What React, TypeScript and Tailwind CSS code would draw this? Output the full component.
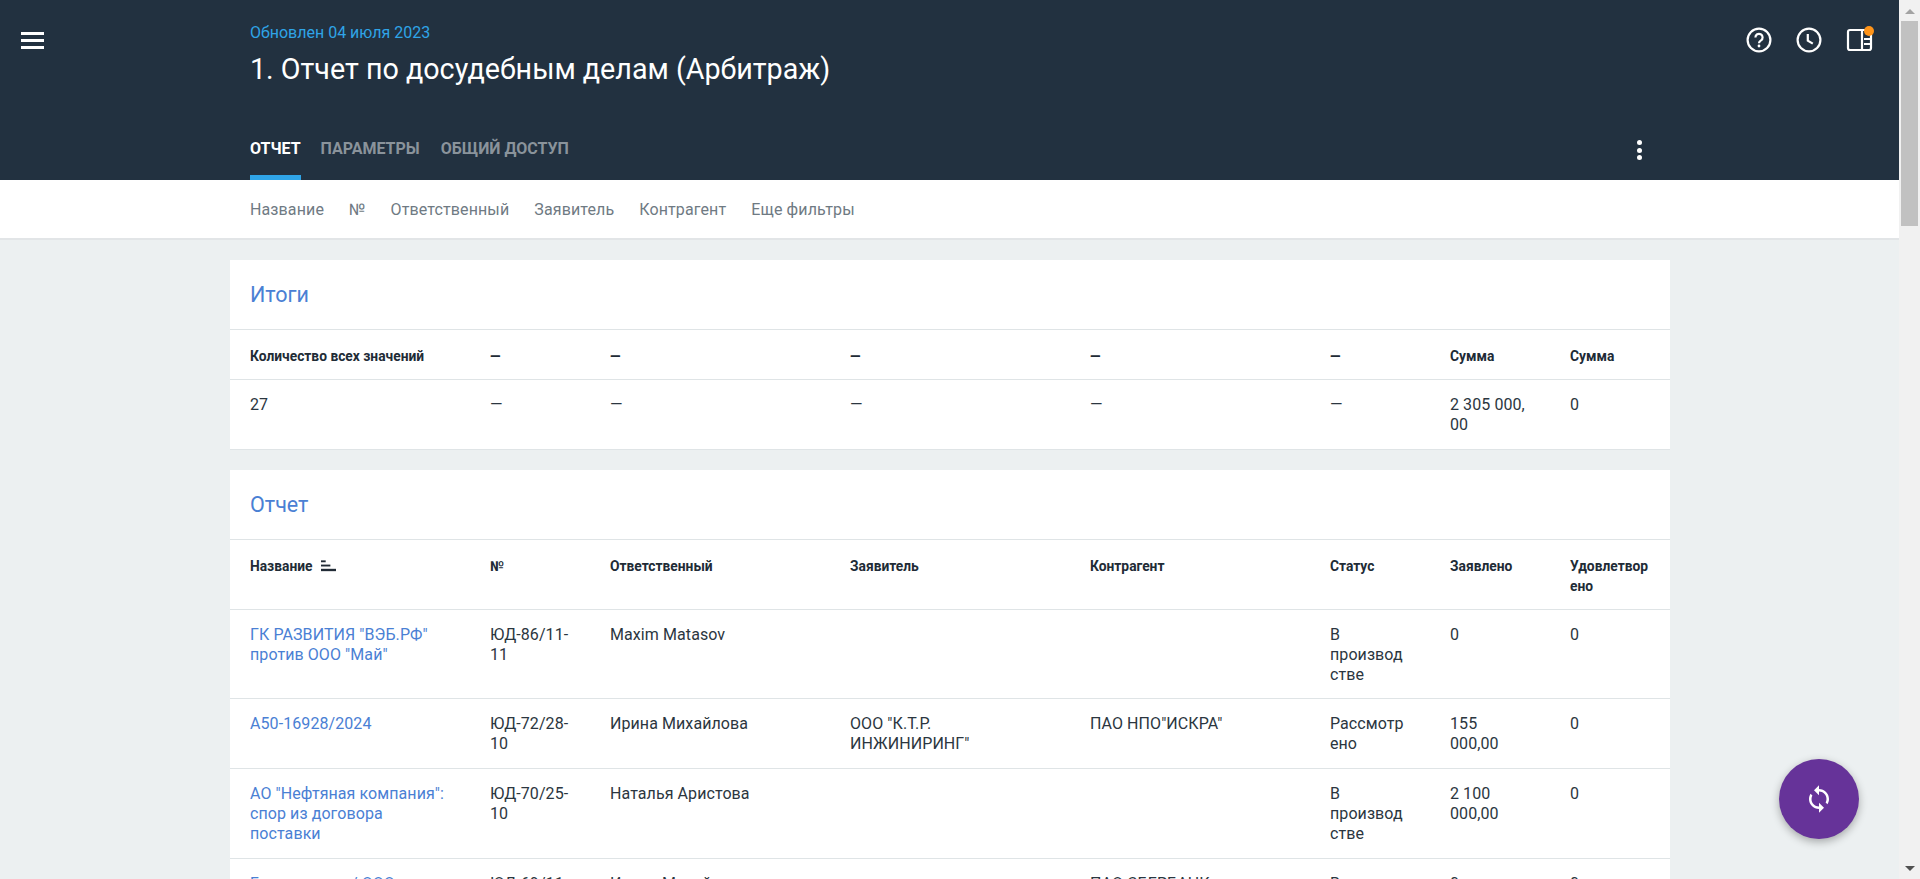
const grid = "grid grid-cols-[240px_120px_240px_240px_240px_120px_120px_120px]";

const reportRows = [
  {
    name: 'ГК РАЗВИТИЯ "ВЭБ.РФ" против ООО "Май"',
    num: "ЮД-86/11-11",
    owner: "Maxim Matasov",
    applicant: "",
    party: "",
    status: "В производстве",
    claimed: "0",
    granted: "0",
    height: "",
  },
  {
    name: "А50-16928/2024",
    num: "ЮД-72/28-10",
    owner: "Ирина Михайлова",
    applicant: 'ООО "К.Т.Р. ИНЖИНИРИНГ"',
    party: 'ПАО НПО"ИСКРА"',
    status: "Рассмотрено",
    claimed: "155 000,00",
    granted: "0",
    height: "h-[70px]",
  },
  {
    name: 'АО "Нефтяная компания": спор из договора поставки',
    num: "ЮД-70/25-10",
    owner: "Наталья Аристова",
    applicant: "",
    party: "",
    status: "В производстве",
    claimed: "2 100 000,00",
    granted: "0",
    height: "h-[90px]",
  },
  {
    name: "Банкротство / ООО",
    num: "ЮД-69/11-11",
    owner: "Ирина Михайлова",
    applicant: "",
    party: "ПАО СБЕРБАНК",
    status: "В производстве",
    claimed: "0",
    granted: "0",
    height: "",
  },
];

function Cell({ children, head }: { children?: React.ReactNode; head?: boolean }) {
  return (
    <div
      className={`pl-5 pr-[21.5px] leading-5 [overflow-wrap:anywhere] ${
        head
          ? "pt-4 pb-3 text-[13.8px] font-bold text-[#212b36]"
          : "pt-[15px] pb-[13px] text-base tracking-[0.08px] text-[#2b3640]"
      }`}
    >
      {children}
    </div>
  );
}

function CardTitle({ children }: { children: React.ReactNode }) {
  return (
    <div className="h-[70px] border-b border-[#dfe4e6] pl-5 text-[21.5px] leading-[70px] text-[#4a80d4]">
      {children}
    </div>
  );
}

export default function App() {
  return (
    <div className="flex h-[879px] overflow-hidden bg-[#ecf0f1] font-['Roboto',sans-serif]">
      <div className="relative min-w-0 flex-1 overflow-hidden">
        {/* Header */}
        <header className="relative h-[180px] bg-[#223140]">
          <button className="absolute left-[21px] top-[32px] flex w-[23px] flex-col gap-[4.5px]">
            <span className="h-[2.5px] w-full bg-white" />
            <span className="h-[2.5px] w-full bg-white" />
            <span className="h-[2.5px] w-full bg-white" />
          </button>

          <div className="absolute right-[26px] top-[26px] flex items-center gap-[22px]">
            <svg width="28" height="28" viewBox="0 0 28 28" fill="none" stroke="#fff" strokeWidth="2.2">
              <circle cx="14" cy="14" r="11.4" />
              <path d="M10.4 11.4a3.6 3.6 0 1 1 5.6 3c-1.3.8-2 1.4-2 2.8" />
              <circle cx="14" cy="20" r="1.4" fill="#fff" stroke="none" />
            </svg>
            <svg width="28" height="28" viewBox="0 0 28 28" fill="none" stroke="#fff" strokeWidth="2.2">
              <circle cx="14" cy="14" r="11.4" />
              <path d="M12.8 8v6.6l5 3" />
            </svg>
            <div className="relative h-[28px] w-[28px]">
              <svg width="28" height="28" viewBox="0 0 28 28" fill="none" stroke="#fff" strokeWidth="2.2">
                <rect x="3" y="4" width="23" height="20" rx="2" />
                <path d="M17 4v20M19 13h7M19 18h7" />
              </svg>
              <span className="absolute -right-px top-0 h-[10px] w-[10px] rounded-full bg-[#ff9419]" />
            </div>
          </div>

          <div className="pl-[250px]">
            <div className="pt-[23px] text-base leading-5 text-[#2fa4e7]">Обновлен 04 июля 2023</div>
            <h1 className="mt-2 text-[28.7px] leading-9 text-white">1. Отчет по досудебным делам (Арбитраж)</h1>
          </div>

          <nav className="absolute bottom-0 left-[250px] flex gap-5 text-base leading-5 font-bold uppercase">
            <div className="h-[41px] border-b-[5px] border-[#2fa4e7] text-white">Отчет</div>
            <div className="text-[#8a939b]">Параметры</div>
            <div className="ml-px text-[#8a939b]">Общий доступ</div>
          </nav>
          <div className="absolute left-[1637px] top-[140px] flex flex-col gap-[2.5px]">
            <span className="h-[5px] w-[5px] rounded-full bg-white" />
            <span className="h-[5px] w-[5px] rounded-full bg-white" />
            <span className="h-[5px] w-[5px] rounded-full bg-white" />
          </div>
        </header>

        {/* Filters */}
        <div className="flex h-[60px] items-center gap-[25px] border-b-2 border-[#e2e5e7] bg-white pl-[250px] pt-[2px] text-base tracking-[0.12px] text-[#6f7a83]">
          <span>Название</span>
          <span>№</span>
          <span>Ответственный</span>
          <span>Заявитель</span>
          <span>Контрагент</span>
          <span>Еще фильтры</span>
        </div>

        <main className="ml-[230px] w-[1440px] pt-5">
          {/* Totals */}
          <section className="border-b border-[#dfe4e6] bg-white">
            <CardTitle>Итоги</CardTitle>
            <div className={`${grid} h-[50px] border-b border-[#dfe4e6]`}>
              <Cell head>Количество всех значений</Cell>
              <Cell head>—</Cell>
              <Cell head>—</Cell>
              <Cell head>—</Cell>
              <Cell head>—</Cell>
              <Cell head>—</Cell>
              <Cell head>Сумма</Cell>
              <Cell head>Сумма</Cell>
            </div>
            <div className={`${grid} h-[69px]`}>
              <Cell>27</Cell>
              <Cell>—</Cell>
              <Cell>—</Cell>
              <Cell>—</Cell>
              <Cell>—</Cell>
              <Cell>—</Cell>
              <Cell>2&nbsp;305&nbsp;000,00</Cell>
              <Cell>0</Cell>
            </div>
          </section>

          {/* Report */}
          <section className="mt-5 bg-white">
            <CardTitle>Отчет</CardTitle>
            <div className={`${grid} h-[70px] border-b border-[#dfe4e6]`}>
              <Cell head>
                <span className="flex items-center gap-[9px]">
                  Название
                  <svg width="15" height="12" viewBox="0 0 16 12" fill="#212b36">
                    <rect x="0" y="0" width="5" height="2" />
                    <rect x="0" y="4.5" width="10" height="2" />
                    <rect x="0" y="9" width="16" height="2.5" />
                  </svg>
                </span>
              </Cell>
              <Cell head>№</Cell>
              <Cell head>Ответственный</Cell>
              <Cell head>Заявитель</Cell>
              <Cell head>Контрагент</Cell>
              <Cell head>Статус</Cell>
              <Cell head>Заявлено</Cell>
              <Cell head>Удовлетворено</Cell>
            </div>
            {reportRows.map((row) => (
              <div key={row.num} className={`${grid} ${row.height} border-b border-[#dfe4e6]`}>
                <Cell>
                  <span className="text-[#4a80d4]">{row.name}</span>
                </Cell>
                <Cell>{row.num}</Cell>
                <Cell>{row.owner}</Cell>
                <Cell>{row.applicant}</Cell>
                <Cell>{row.party}</Cell>
                <Cell>{row.status}</Cell>
                <Cell>{row.claimed}</Cell>
                <Cell>{row.granted}</Cell>
              </div>
            ))}
          </section>
        </main>

        <button className="absolute bottom-10 right-10 flex h-20 w-20 items-center justify-center rounded-full bg-[#663399] shadow-[0_3px_8px_rgba(0,0,0,0.3)]">
          <svg width="30" height="30" viewBox="0 0 24 24" fill="#fff">
            <path d="M12 4V1L8 5l4 4V6c3.31 0 6 2.69 6 6 0 1.01-.25 1.97-.7 2.8l1.46 1.46C19.54 15.03 20 13.57 20 12c0-4.42-3.58-8-8-8zm0 14c-3.31 0-6-2.69-6-6 0-1.01.25-1.97.7-2.8L5.24 7.74C4.46 8.97 4 10.43 4 12c0 4.42 3.58 8 8 8v3l4-4-4-4v3z" />
          </svg>
        </button>
      </div>

      {/* Scrollbar */}
      <aside className="flex w-[21px] shrink-0 flex-col items-center bg-[#f1f1f1]">
        <div className="mt-[9px] h-0 w-0 border-x-[5px] border-b-[5px] border-x-transparent border-b-[#a3a3a3]" />
        <div className="mt-[7px] h-[205px] w-[17px] bg-[#c1c1c1]" />
        <div className="mt-auto mb-[8px] h-0 w-0 border-x-[5px] border-t-[5px] border-x-transparent border-t-[#505050]" />
      </aside>
    </div>
  );
}
